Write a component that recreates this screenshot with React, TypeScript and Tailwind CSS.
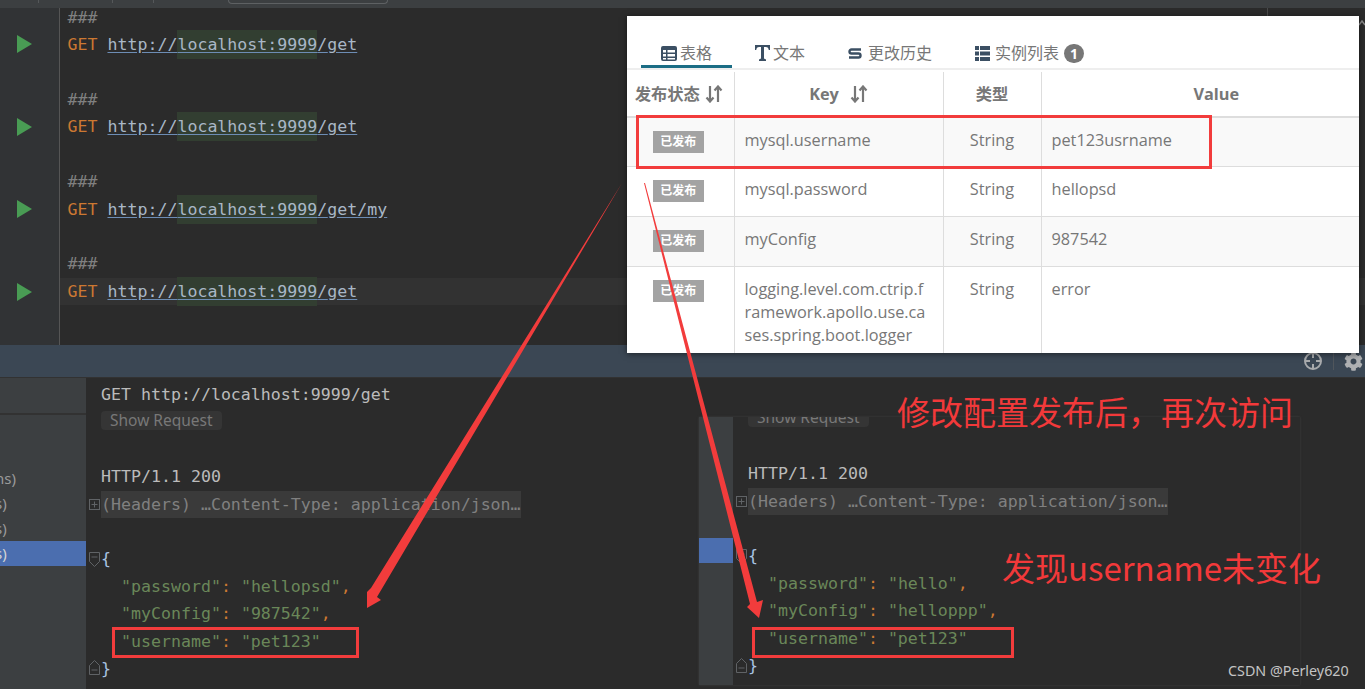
import type { ReactNode } from "react";
import { FaCog } from "react-icons/fa";

const monoFont = "font-['DejaVu_Sans_Mono','Liberation_Mono',monospace] text-[16.6px]";
const tableFont = "font-['Open_Sans','Noto_Sans_CJK_SC',sans-serif]";
const noteFont = "font-['Noto_Sans_CJK_SC',sans-serif] text-[#f2393a] whitespace-nowrap";

const requests = ["get", "get", "get/my", "get"];
const sideRows = ["ns)", "s)", "s)", "s)"];

const rows = [
    { key: ["mysql.username"], value: "pet123usrname" },
    { key: ["mysql.password"], value: "hellopsd" },
    { key: ["myConfig"], value: "987542" },
    { key: ["logging.level.com.ctrip.f", "ramework.apollo.use.ca", "ses.spring.boot.logger"], value: "error" },
];

const Line = ({ children, className = "" }: { children?: ReactNode; className?: string }) => (
    <div className={`h-[27.4px] leading-[27.4px] whitespace-pre ${className}`}>{children}</div>
);

const PlayIcon = () => (
    <svg width="15" height="18" viewBox="0 0 15 18"><polygon points="0,0 15,9 0,18" fill="#499c54" /></svg>
);

const SortIcon = () => (
    <svg width="18" height="18" viewBox="0 0 18 18" fill="none" stroke="currentColor" strokeWidth="2.2">
        <path d="M5 1v15M1.5 12.5L5 16.5l3.5-4" />
        <path d="M13 17V2M9.5 5.5L13 1.500l3.500 4" />
    </svg>
);

const FoldPlus = () => (
    <svg width="11" height="11" viewBox="0 0 11 11" fill="none" stroke="#606366">
        <rect x="0.5" y="0.5" width="10" height="10" />
        <path d="M2.500 5.500h6M5.500 2.500v6" />
    </svg>
);

const FoldOpen = () => (
    <svg width="11" height="15" viewBox="0 0 11 15" fill="none" stroke="#606366">
        <path d="M0.500 0.500h10v9l-5 5-5-5z" />
        <path d="M2.500 5h6" />
    </svg>
);

const FoldClose = () => (
    <svg width="11" height="15" viewBox="0 0 11 15" fill="none" stroke="#606366">
        <path d="M0.500 14.500h10v-9l-5-5-5 5z" />
        <path d="M2.500 10h6" />
    </svg>
);

const JsonBody = ({ password, config }: { password: string; config: string }) => (
    <>
        <Line className="text-[#a9c4e4]">{"{"}</Line>
        <Line className="text-[#6a8759]">  "password"<span className="text-[#cc7832]">:</span> "{password}"<span className="text-[#cc7832]">,</span></Line>
        <Line className="text-[#6a8759]">  "myConfig"<span className="text-[#cc7832]">:</span> "{config}"<span className="text-[#cc7832]">,</span></Line>
        <Line className="text-[#6a8759]">  "username"<span className="text-[#cc7832]">:</span> "pet123"</Line>
        <Line className="text-[#a9c4e4]">{"}"}</Line>
    </>
);

const HeadersLine = () => (
    <Line className="w-[420px] bg-[#3a3a3a] text-[#808080]">(Headers) …Content-Type: application/json…</Line>
);

const ShowRequest = () => (
    <div className="w-[121px] h-[19px] rounded bg-[#353535] pl-[9px] text-[15.5px] leading-[19px] text-[#787878] font-['Noto_Sans',sans-serif]">
        Show Request
    </div>
);

const FoldGutter = () => (
    <div className="relative w-[15px] shrink-0">
        <span className="absolute left-[3px] top-[121px]"><FoldPlus /></span>
        <span className="absolute left-[3px] top-[174px]"><FoldOpen /></span>
        <span className="absolute left-[3px] top-[282px]"><FoldClose /></span>
    </div>
);

const TableIcon = () => (
    <svg width="16" height="15" viewBox="0 0 16 15" fill="#3b4f63">
        <path fillRule="evenodd" d="M2 0h12a2 2 0 012 2v11a2 2 0 01-2 2H2a2 2 0 01-2-2V2a2 2 0 012-2zM2 4v2.500h3V4zm4.500 0v2.500H14V4zM2 8v2.500h3V8zm4.500 0v2.500H14V8zM2 12v1.500h3V12zm4.500 0v1.500H14V12z" />
    </svg>
);

const TextIcon = () => (
    <svg width="15" height="16" viewBox="0 0 15 16" fill="#3b4f63">
        <path d="M0 0h15v5h-1.200c-.4-2-1-3-3-3H9v11.500l2 1V16H4v-1.500l2-1V2H4.200c-2 0-2.600 1-3 3H0z" />
    </svg>
);

const HistoryIcon = () => (
    <svg width="14" height="13" viewBox="0 0 14 13" fill="none" stroke="#3b4f63" strokeWidth="2.400">
        <path d="M13 2.500H3.500a2 2 0 000 4h7a2 2 0 010 4H1" />
    </svg>
);

const ListIcon = () => (
    <svg width="15" height="15" viewBox="0 0 15 15" fill="#3b4f63">
        <path d="M0 0h4v4H0zM5 0h10v4H5zM0 5.500h4v4H0zM5 5.500h10v4H5zM0 11h4v4H0zM5 11h10v4H5z" />
    </svg>
);

const ConfigPopup = () => (
    <div className={`absolute left-[627px] top-[16px] w-[732px] h-[337px] overflow-hidden bg-white shadow-[0_1px_6px_rgba(0,0,0,0.5)] ${tableFont}`}>
        <div className="flex h-[54px] items-end border-b-2 border-[#eeeeee] pl-[14px] text-[16px] text-[#777777]">
            <div className="flex h-[38px] w-[91px] items-start justify-center gap-[3px] border-b-[3px] border-[#1b6d85] pt-[12px] leading-[22px]">
                <span className="mt-[4px]"><TableIcon /></span>表格
            </div>
            <div className="ml-[23px] flex h-[38px] items-start gap-[3px] pt-[12px] leading-[22px]">
                <span className="mt-[3px]"><TextIcon /></span>文本
            </div>
            <div className="ml-[43px] flex h-[38px] items-start gap-[6px] pt-[12px] leading-[22px]">
                <span className="mt-[5px]"><HistoryIcon /></span>更改历史
            </div>
            <div className="ml-[43px] flex h-[38px] items-start gap-[5px] pt-[12px] leading-[22px]">
                <span className="mt-[4px]"><ListIcon /></span>实例列表
                <span className="mt-[2px] flex h-[19px] w-[20px] items-center justify-center rounded-full bg-[#777777] text-[14px] font-bold text-white">1</span>
            </div>
        </div>
        <table className="mt-[2px] w-[764px] table-fixed border-collapse text-[16.3px] text-[#777777]">
            <colgroup>
                <col className="w-[107px]" />
                <col className="w-[209px]" />
                <col className="w-[98px]" />
                <col />
            </colgroup>
            <thead>
                <tr className="h-[45px] border-b-2 border-[#dddddd] font-bold">
                    <th className="border-r border-[#dddddd] pr-[3px] text-center whitespace-nowrap">
                        <span className="inline-flex items-center gap-[5px]">发布状态<SortIcon /></span>
                    </th>
                    <th className="border-r border-[#dddddd] text-center">
                        <span className="inline-flex items-center gap-[11px]">Key<SortIcon /></span>
                    </th>
                    <th className="border-r border-[#dddddd] text-center">类型</th>
                    <th className="text-center">Value</th>
                </tr>
            </thead>
            <tbody>
                {rows.map((row, i) => (
                    <tr key={row.value} className={`border-b border-[#dddddd] align-top ${i % 2 === 0 ? "bg-[#f9f9f9]" : "bg-white"}`}>
                        <td className={`border-r border-[#dddddd] pt-[10px] pr-[4px] text-center ${i === 0 ? "h-[49px]" : "h-[50px]"}`}>
                            <span className="inline-block h-[22px] w-[51px] bg-[#a3a3a3] text-[12px] font-bold leading-[22px] text-white">已发布</span>
                        </td>
                        <td className="border-r border-[#dddddd] px-[10px] pt-[11px] pb-[6px] leading-[23px]">
                            {row.key.map((part) => (
                                <div key={part}>{part}</div>
                            ))}
                        </td>
                        <td className="border-r border-[#dddddd] pt-[11px] text-center leading-[23px]">String</td>
                        <td className="px-[10px] pt-[11px] leading-[23px]">{row.value}</td>
                    </tr>
                ))}
            </tbody>
        </table>
    </div>
);

const App = () => {
    return (
        <div className="relative h-[689px] w-[1365px] overflow-hidden bg-[#2b2b2b]">
            {/* top tab strip */}
            <div className="relative h-[8px] bg-[#3c3f41]">
                <span className="absolute left-[38px] top-0 h-[3px] w-px bg-[#55585a]" />
                <span className="absolute left-[112px] top-0 h-[3px] w-px bg-[#55585a]" />
                <span className="absolute left-[153px] top-0 h-[3px] w-px bg-[#55585a]" />
                <span className="absolute left-[228px] top-0 h-[4px] w-[160px] rounded-b border border-t-0 border-[#5e6163]" />
            </div>

            {/* editor */}
            <div className={`flex h-[337px] overflow-hidden ${monoFont}`}>
                <div className="w-[60px] shrink-0 border-r border-[#555555] bg-[#313335]">
                    {requests.map((_, i) => (
                        <div key={i} className={`flex h-[82.500px] items-center pl-[17px] ${i === 0 ? "-mt-[5.200px]" : ""}`}>
                            <PlayIcon />
                        </div>
                    ))}
                </div>
                <div className="min-w-0 flex-1 -mt-[4.200px]">
                    {requests.map((path, i) => (
                        <div key={i}>
                            <Line className="pl-[7.500px] text-[#808080]">###</Line>
                            <Line className={`pl-[7.500px] ${i === 3 ? "bg-[#323232]" : ""}`}>
                                <span className="text-[#cc7832]">GET </span>
                                <span className="text-[#a9b7c6] underline decoration-[#6d8db5] underline-offset-2">
                                    http://<span className="bg-[#323e31] py-[5px]">localhost:9999</span>/{path}
                                </span>
                            </Line>
                            {i < 3 && <Line />}
                        </div>
                    ))}
                </div>
            </div>

            {/* tool window header */}
            <div className="flex h-[33px] items-center justify-end border-b border-[#323232] bg-[#3b4754] pr-[3px]">
                <svg width="20" height="20" viewBox="0 0 20 20" fill="none" stroke="#a9abad" strokeWidth="2">
                    <circle cx="10" cy="10" r="8" />
                    <path d="M10 2v5M10 13v5M2 10h5M13 10h5" />
                </svg>
                <span className="mx-[10px] h-[18px] w-px bg-[#50565c]" />
                <FaCog className="mr-[-1px] h-[19px] w-[19px] text-[#aeb0b2]" />
            </div>

            {/* response pane */}
            <div className={`flex h-[311px] ${monoFont}`}>
                <div className="w-[86px] shrink-0 bg-[#3c3f41] text-[15px] leading-[25px] text-[#9a9a9a] font-['Noto_Sans',sans-serif]">
                    <div className="h-[37px] border-b-2 border-[#323232]" />
                    <div className="mt-[51px]">
                        {sideRows.map((label, i) => (
                            <div key={i} className={`h-[25px] overflow-hidden ${i === 3 ? "bg-[#4b6eaf] text-[#d5d5d5]" : ""}`}>
                                <span className="-ml-[5px] block">{label}</span>
                            </div>
                        ))}
                    </div>
                </div>
                <FoldGutter />
                <div className="min-w-0 flex-1 pt-[3px] text-[#bbbbbb]">
                    <Line>GET http://localhost:9999/get</Line>
                    <div className="h-[27.400px] pt-[3px]"><ShowRequest /></div>
                    <Line />
                    <Line>HTTP/1.1 200</Line>
                    <HeadersLine />
                    <Line />
                    <JsonBody password="hellopsd" config="987542" />
                </div>
            </div>

            {/* second response window pasted on top */}
            <div className={`absolute left-[699px] top-[417px] flex h-[268px] w-[601px] overflow-hidden bg-[#2b2b2b] shadow-[0_0_2px_rgba(70,70,70,0.8)] ${monoFont}`}>
                <div className="w-[34px] shrink-0 bg-[#3c3f41] pt-[121px]">
                    <div className="h-[25px] bg-[#4b6eaf]" />
                </div>
                <div className="relative w-[15px] shrink-0">
                    <span className="absolute left-[3px] top-[79px]"><FoldPlus /></span>
                    <span className="absolute left-[3px] top-[132px]"><FoldOpen /></span>
                    <span className="absolute left-[3px] top-[241px]"><FoldClose /></span>
                </div>
                <div className="min-w-0 flex-1 text-[#bbbbbb]">
                    <div className="-mt-[9px] h-[52.200px]"><ShowRequest /></div>
                    <Line>HTTP/1.1 200</Line>
                    <HeadersLine />
                    <Line />
                    <JsonBody password="hello" config="helloppp" />
                </div>
            </div>

            {/* small scrap of the editor's right edge */}
            <span className="absolute left-[1267px] top-[8px] h-[8px] w-px bg-[#4a4a4a]" />
            <svg className="absolute left-[1359px] top-[19px]" width="6" height="8" viewBox="0 0 6 8" fill="none" stroke="#8a8a8a" strokeWidth="1.500">
                <path d="M0 6l3-4 3 4" />
            </svg>

            <ConfigPopup />

            {/* annotations */}
            <svg className="pointer-events-none absolute inset-0" width="1365" height="689" viewBox="0 0 1365 689">
                <polygon points="622,183 377,597 381,600 367,608 367,592 371,588" fill="#f23c3c" />
                <polygon points="644,183 645,183 757,602 763,600 759,618 747,607 750,604" fill="#f23c3c" />
            </svg>
            <div className="absolute left-[636px] top-[115px] h-[54px] w-[576px] border-[3px] border-[#f23c3c]" />
            <div className="absolute left-[112px] top-[627px] h-[31px] w-[247px] border-[3px] border-[#f23c3c]" />
            <div className="absolute left-[752px] top-[627px] h-[31px] w-[262px] border-[3px] border-[#f23c3c]" />
            <div className={`absolute left-[897px] top-[387px] text-[33px] leading-[48px] ${noteFont}`}>修改配置发布后，再次访问</div>
            <div className={`absolute left-[1002px] top-[543px] text-[33px] leading-[48px] ${noteFont}`}>发现username未变化</div>
            <div className="absolute left-[1228px] top-[661px] text-[14.3px] leading-[20px] text-[#c4c4c4] font-['Noto_Sans',sans-serif] whitespace-nowrap">CSDN @Perley620</div>
        </div>
    );
};

export default App;
